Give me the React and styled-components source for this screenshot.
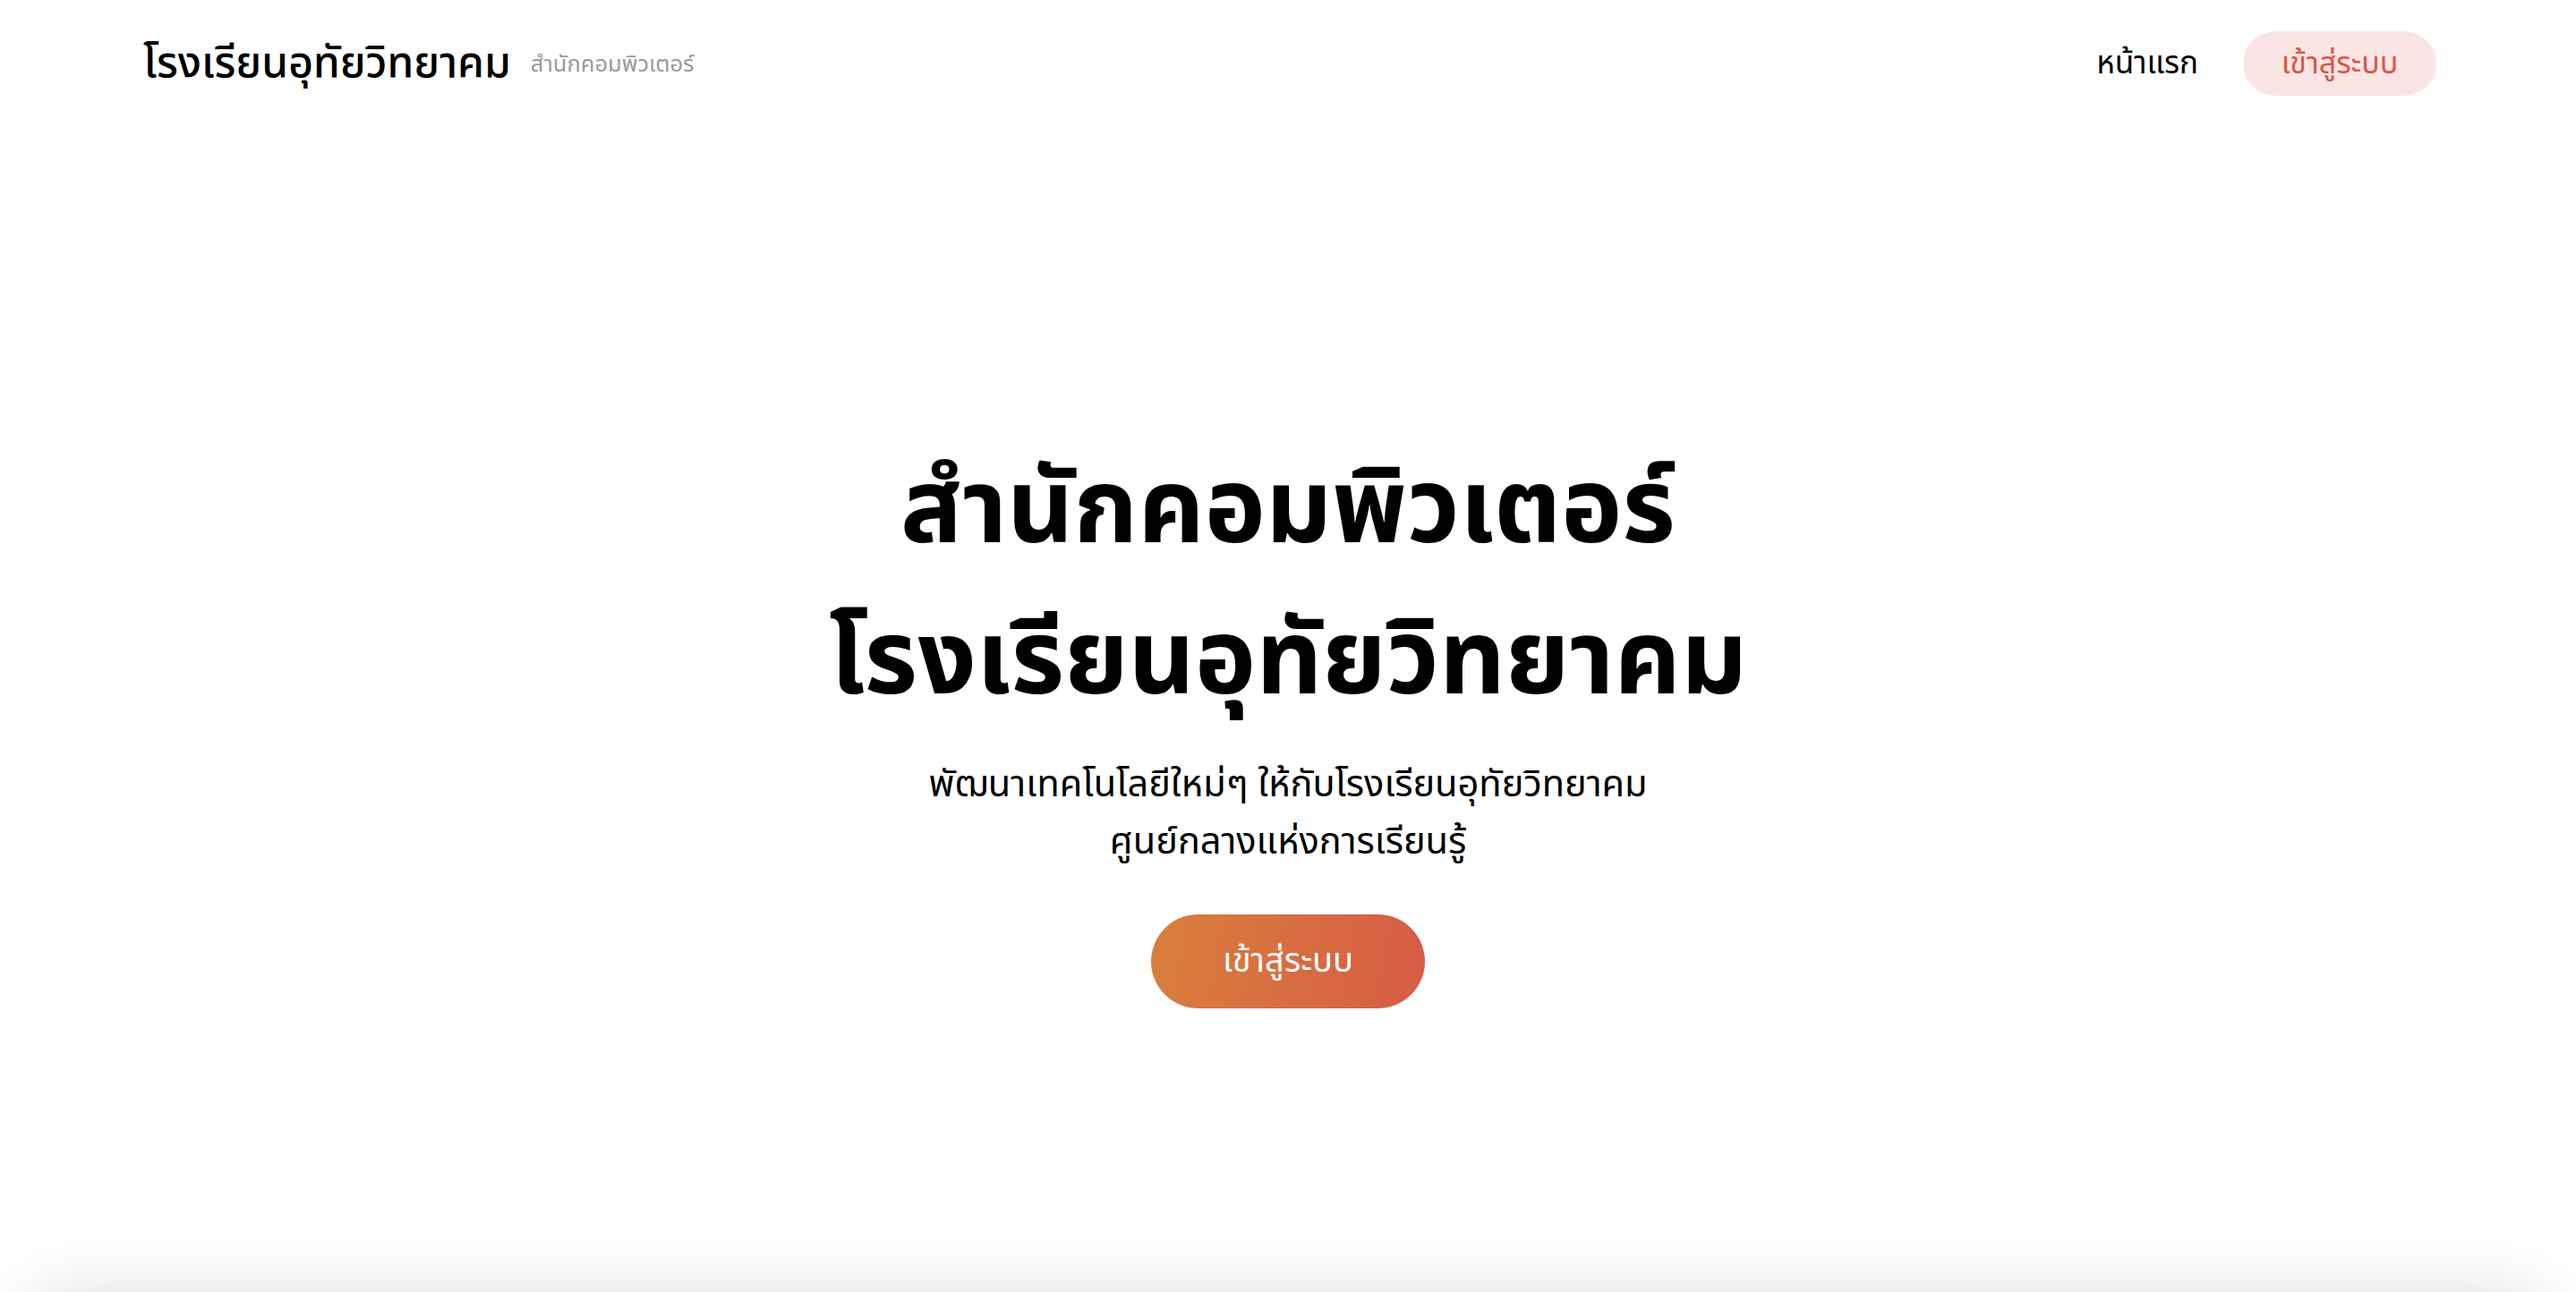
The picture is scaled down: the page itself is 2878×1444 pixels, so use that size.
import * as React from "react"
import styled, { createGlobalStyle } from "styled-components";

const thai = `"Noto Sans Thai", "Noto Sans Thai UI", "Noto Sans", sans-serif`;

const GlobalStyle = createGlobalStyle`
  html, body {
    margin: 0;
    padding: 0;
    background: #fff;
    font-family: ${thai};
    color: #000;
  }
  * { box-sizing: border-box; }
`;

const App = () => {
    return (
        <>
            <GlobalStyle />
            <Header>
                <Brand>
                    <BrandName>โรงเรียนอุทัยวิทยาคม</BrandName>
                    <BrandSub>สำนักคอมพิวเตอร์</BrandSub>
                </Brand>
                <Nav>
                    <NavLink href="#">หน้าแรก</NavLink>
                    <LoginPill href="#">เข้าสู่ระบบ</LoginPill>
                </Nav>
            </Header>
            <Hero>
                <Title>
                    สำนักคอมพิวเตอร์
                    <br />
                    โรงเรียนอุทัยวิทยาคม
                </Title>
                <Lead>
                    พัฒนาเทคโนโลยีใหม่ๆ ให้กับโรงเรียนอุทัยวิทยาคม
                    <br />
                    ศูนย์กลางแห่งการเรียนรู้
                </Lead>
                <CtaButton href="#">เข้าสู่ระบบ</CtaButton>
            </Hero>
            <NextSection />
        </>
    )
}

const Header = styled.header`
    height: 142px;
    max-width: 2566px;
    margin: 0 auto;
    display: flex;
    align-items: center;
    justify-content: space-between;
`

const Brand = styled.div`
    display: flex;
    align-items: center;
    gap: 22px;
    padding-left: 4px;
`

const BrandName = styled.span`
    font-size: 48px;
    font-weight: 500;
    color: #000;
`

const BrandSub = styled.span`
    font-size: 25.5px;
    color: #9a9a9a;
    padding-top: 2px;
`

const Nav = styled.nav`
    display: flex;
    align-items: center;
    gap: 50px;
`

const NavLink = styled.a`
    font-size: 35px;
    color: #000;
    text-decoration: none;
`

const LoginPill = styled.a`
    width: 216px;
    height: 72px;
    border-radius: 999px;
    background: #fbe5e4;
    color: #d9574a;
    font-size: 34px;
    text-decoration: none;
    display: flex;
    align-items: center;
    justify-content: center;
`

const Hero = styled.section`
    min-height: calc(100vh - 142px);
    padding-top: 28px;
    display: flex;
    flex-direction: column;
    align-items: center;
    justify-content: center;
    text-align: center;
`

const Title = styled.h1`
    margin: 0;
    font-size: 115px;
    font-weight: 700;
    line-height: 1.47;
`

const Lead = styled.p`
    margin: 21px 0 48px;
    font-size: 41.5px;
    line-height: 1.55;
`

const CtaButton = styled.a`
    width: 306px;
    height: 105px;
    border-radius: 999px;
    background: linear-gradient(100deg, #d9803c 0%, #d75b45 100%);
    color: #fff;
    font-size: 38px;
    text-decoration: none;
    display: flex;
    align-items: center;
    justify-content: center;
`

const NextSection = styled.section`
    height: 600px;
    margin: 0 16px;
    border-radius: 80px;
    background: #fff;
    box-shadow: 0 0 70px rgba(0, 0, 0, 0.14);
`

export default App
